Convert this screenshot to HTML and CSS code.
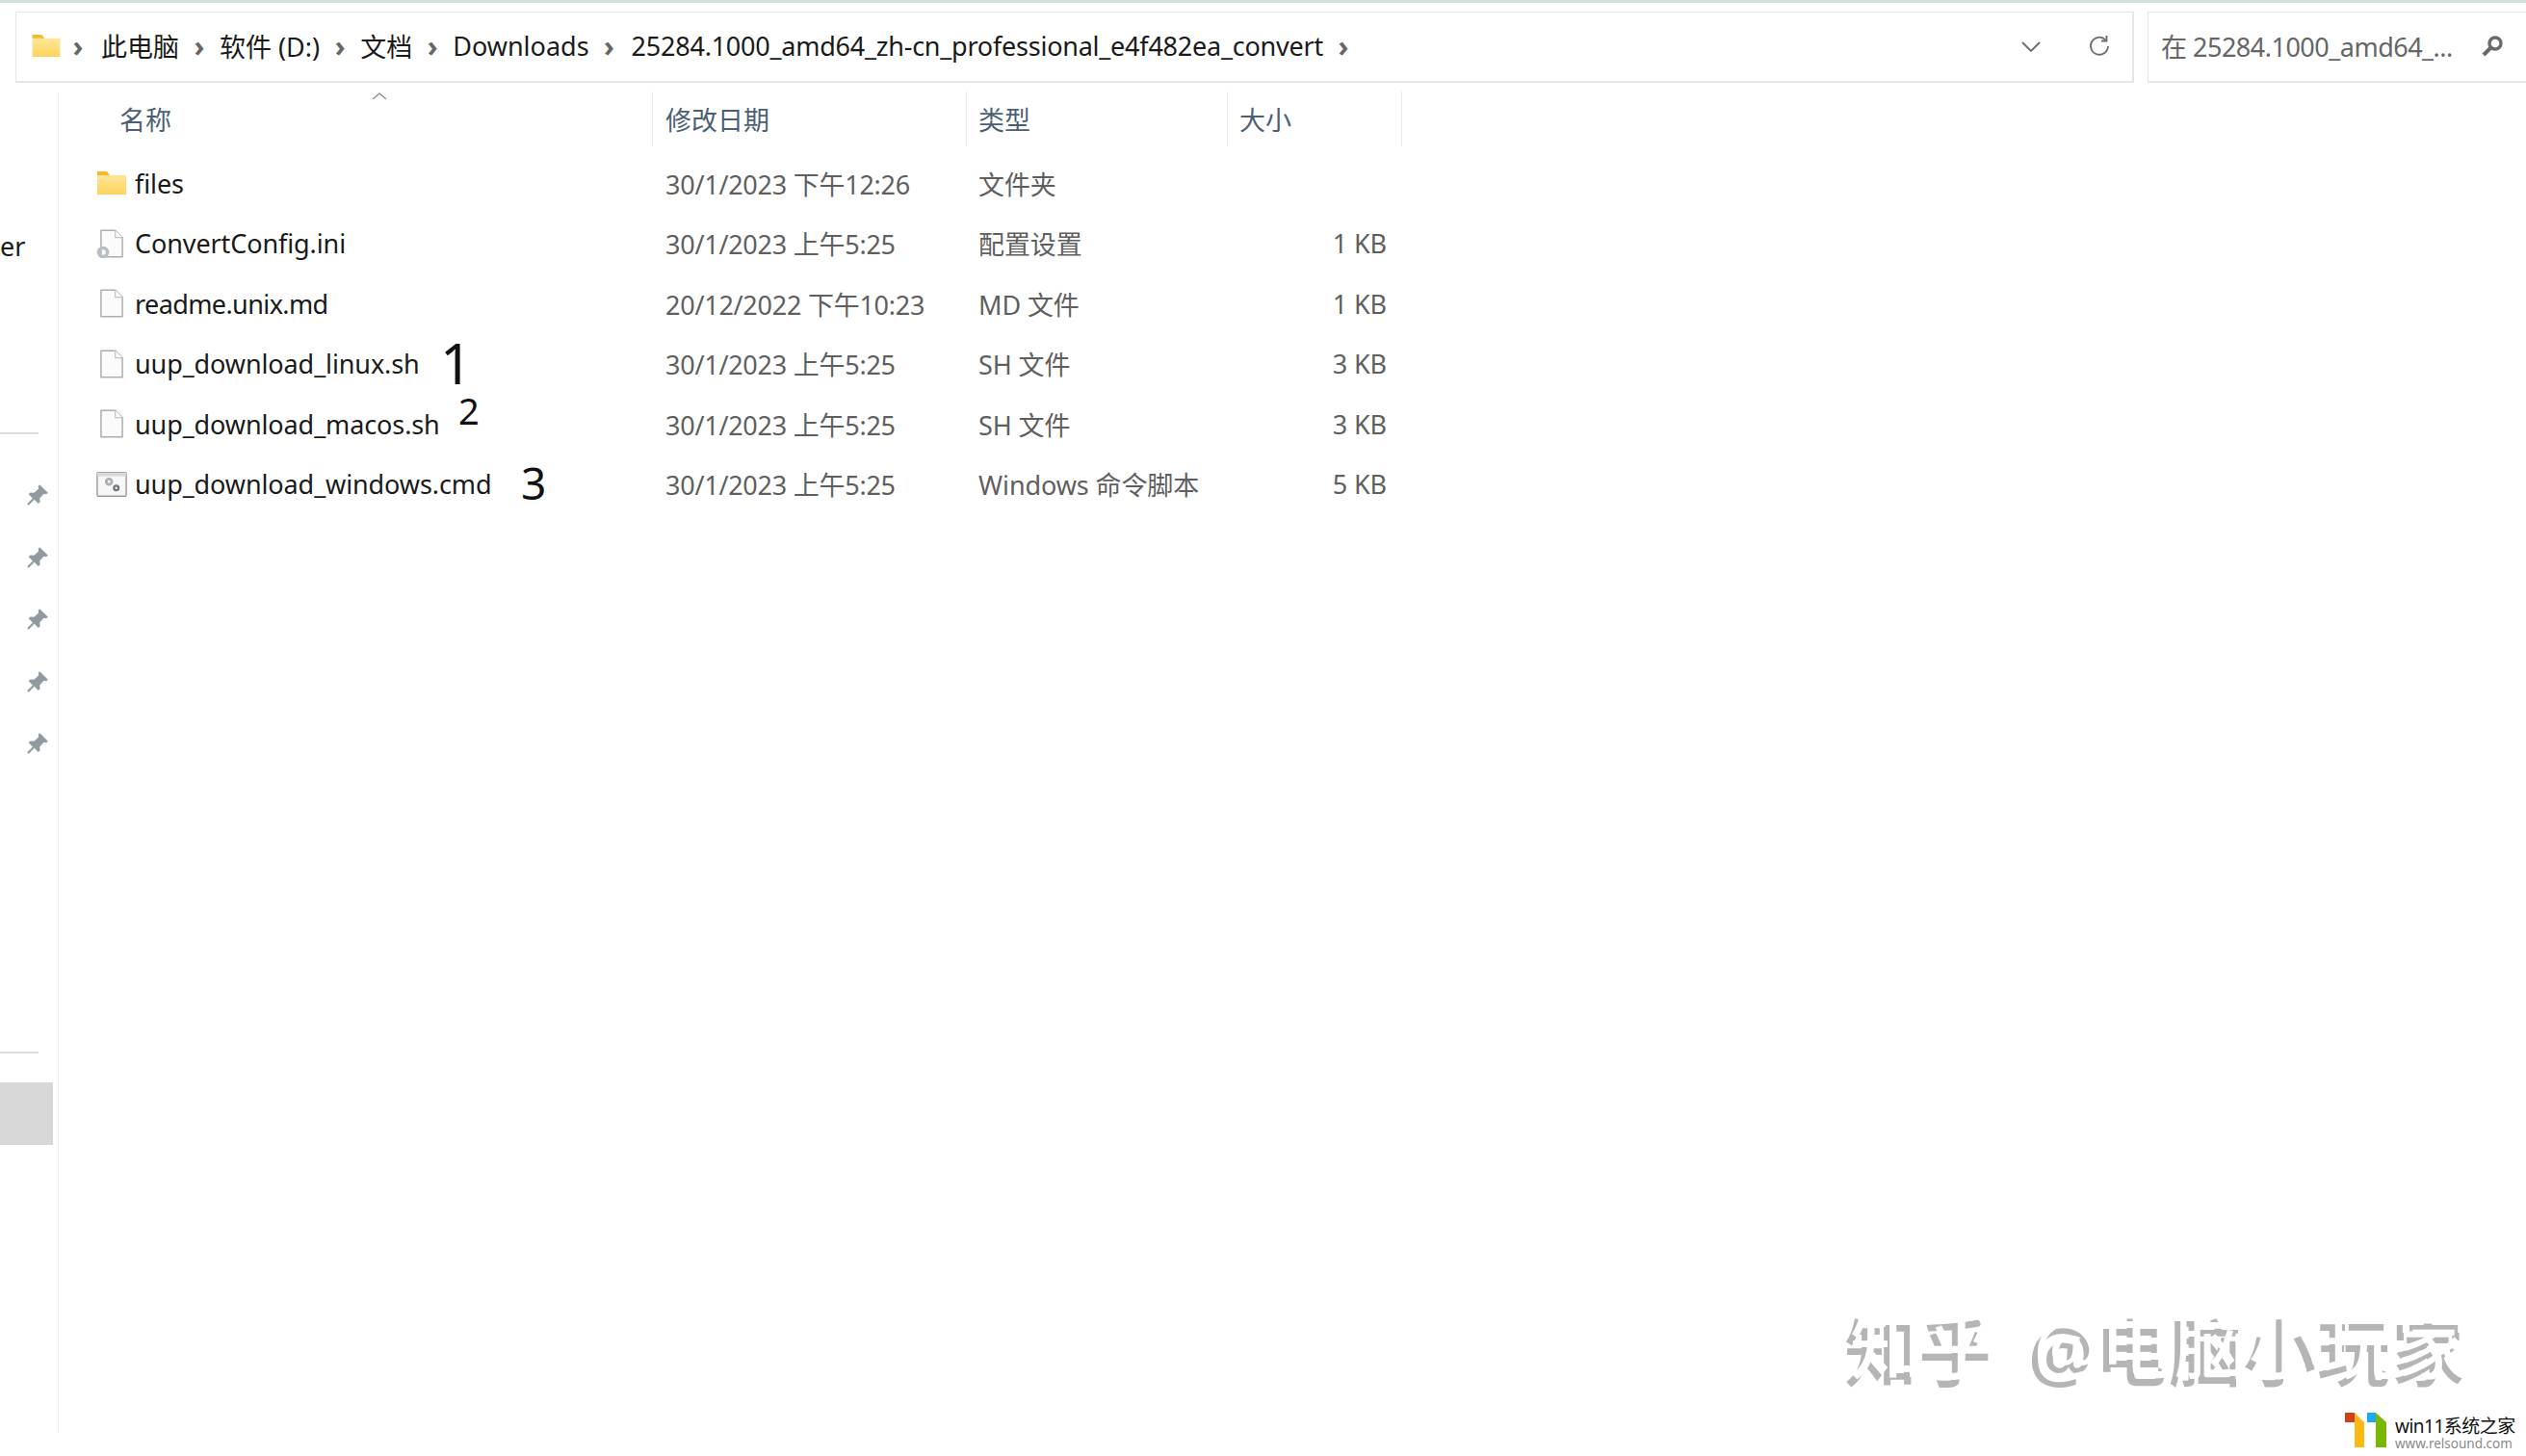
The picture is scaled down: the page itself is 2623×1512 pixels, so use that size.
FILE: index.html
```html
<!DOCTYPE html>
<html lang="zh-CN">
<head>
  <meta charset="UTF-8" />
  <title>Downloads</title>
  <link rel="stylesheet" href="styles.css">
</head>
<body>
  <svg class="defs" width="0" height="0">
    <symbol id="folder" viewBox="0 0 30 24">
      <defs>
        <linearGradient id="folderFill" x1="0" y1="0" x2="0" y2="1">
          <stop offset="0" stop-color="#ffe9a0" />
          <stop offset="1" stop-color="#fdd35c" />
        </linearGradient>
      </defs>
      <path d="M0 1h10l3 3h17v20H0z" fill="url(#folderFill)" />
      <path d="M0 0h10l3 4H0z" fill="#f5b82e" />
    </symbol>
    <symbol id="page" viewBox="0 0 26 32">
      <path d="M1 1h16l8 8v22H1z" fill="#fbfbfb" stroke="#adadad" stroke-width="1.6" />
      <path d="M17 1v8h8" fill="#fff" stroke="#c4c4c4" stroke-width="1.4" />
    </symbol>
    <symbol id="pin" viewBox="0 0 24 24">
      <path d="M14 2l8 8-1.600 1.200-2.400-.4-4 4.400.4 3.600-1.600 1.600-4-4L3.500 22 2 20.500l5.400-5.300-4-4L5 9.600l3.600.4L13 6l-.4-2.400z" fill="#8f9aa1" />
    </symbol>
  </svg>

  <div class="topline"></div>

  <header class="toolbar">
    <div class="address">
      <svg class="addr-folder"><use href="#folder" /></svg>
      <span class="sep">›</span>
      <span class="crumb crumb-first">此电脑</span>
      <span class="sep">›</span>
      <span class="crumb">软件 (D:)</span>
      <span class="sep">›</span>
      <span class="crumb">文档</span>
      <span class="sep">›</span>
      <span class="crumb">Downloads</span>
      <span class="sep">›</span>
      <span class="crumb crumb-long">25284.1000_amd64_zh-cn_professional_e4f482ea_convert</span>
      <span class="sep">›</span>
      <div class="addr-tools">
        <svg class="tool" viewBox="0 0 24 24"><path d="M3 8l9 9 9-9" fill="none" stroke="#6b6b6b" stroke-width="1.800" /></svg>
        <svg class="tool" viewBox="0 0 24 24"><path d="M18.500 5.500A9 9 0 1 0 21 12" fill="none" stroke="#6b6b6b" stroke-width="1.800" /><path d="M14 6.500h5.500V1" fill="none" stroke="#6b6b6b" stroke-width="1.800" /></svg>
      </div>
    </div>
    <div class="search">
      <span class="search-text">在 25284.1000_amd64_...</span>
      <svg class="search-icon" viewBox="0 0 24 24"><circle cx="15" cy="9" r="6" fill="none" stroke="#6a6a6a" stroke-width="3.400" /><path d="M10.500 13.500L3 21" stroke="#6a6a6a" stroke-width="4" /></svg>
    </div>
  </header>

  <div class="main">
    <aside class="nav">
      <div class="nav-label">er</div>
      <hr class="nav-line first">
      <ul class="pins">
        <li><svg class="pin"><use href="#pin" /></svg></li>
        <li><svg class="pin"><use href="#pin" /></svg></li>
        <li><svg class="pin"><use href="#pin" /></svg></li>
        <li><svg class="pin"><use href="#pin" /></svg></li>
        <li><svg class="pin"><use href="#pin" /></svg></li>
      </ul>
      <hr class="nav-line second">
      <div class="nav-selected"></div>
    </aside>

    <section class="files">
      <div class="row head">
        <div class="col name">名称<svg class="sort" viewBox="0 0 16 8"><path d="M1 7l7-6 7 6" fill="none" stroke="#8a8a8a" stroke-width="1.300" /></svg></div>
        <div class="col date">修改日期</div>
        <div class="col type">类型</div>
        <div class="col size">大小</div>
      </div>

      <div class="row item">
        <div class="col name"><svg class="icon folder-icon"><use href="#folder" /></svg>files</div>
        <div class="col date">30/1/2023 下午12:26</div>
        <div class="col type">文件夹</div>
        <div class="col size"></div>
      </div>
      <div class="row item">
        <div class="col name">
          <svg class="icon" viewBox="0 0 32 32">
            <use href="#page" x="4" width="24" height="32" />
            <circle cx="7" cy="25" r="4.500" fill="none" stroke="#b7bec4" stroke-width="3.500" />
          </svg>ConvertConfig.ini
        </div>
        <div class="col date">30/1/2023 上午5:25</div>
        <div class="col type">配置设置</div>
        <div class="col size">1 KB</div>
      </div>
      <div class="row item">
        <div class="col name name-tight"><svg class="icon"><use href="#page" x="4" width="24" height="32" /></svg>readme.unix.md</div>
        <div class="col date">20/12/2022 下午10:23</div>
        <div class="col type">MD 文件</div>
        <div class="col size">1 KB</div>
      </div>
      <div class="row item">
        <div class="col name"><svg class="icon"><use href="#page" x="4" width="24" height="32" /></svg>uup_download_linux.sh<span class="mark mark-1">1</span></div>
        <div class="col date">30/1/2023 上午5:25</div>
        <div class="col type">SH 文件</div>
        <div class="col size">3 KB</div>
      </div>
      <div class="row item">
        <div class="col name"><svg class="icon"><use href="#page" x="4" width="24" height="32" /></svg>uup_download_macos.sh<span class="mark mark-2">2</span></div>
        <div class="col date">30/1/2023 上午5:25</div>
        <div class="col type">SH 文件</div>
        <div class="col size">3 KB</div>
      </div>
      <div class="row item">
        <div class="col name">
          <svg class="icon" viewBox="0 0 34 28">
            <rect x="1" y="1" width="32" height="26" rx="1" fill="#f7f7f7" stroke="#9a9a9a" stroke-width="1.500" />
            <rect x="1" y="1" width="32" height="4" fill="#d9d9d9" />
            <circle cx="14" cy="11" r="3" fill="none" stroke="#a9b0b6" stroke-width="3" />
            <circle cx="22" cy="18" r="2.500" fill="none" stroke="#6f767c" stroke-width="2.500" />
          </svg>uup_download_windows.cmd<span class="mark mark-3">3</span>
        </div>
        <div class="col date">30/1/2023 上午5:25</div>
        <div class="col type">Windows 命令脚本</div>
        <div class="col size">5 KB</div>
      </div>
    </section>
  </div>

  <div class="watermark">知乎 @电脑小玩家</div>

  <div class="site-logo">
    <svg class="logo-mark" viewBox="0 0 43 36">
      <rect x="0" y="0" width="10" height="10" fill="#d2401e" />
      <path d="M10 0l10 10v26H10z" fill="#fdb913" />
      <rect x="23" y="0" width="9" height="10" fill="#1ea7f2" />
      <path d="M32 0l11 10v26H32z" fill="#7ab800" />
    </svg>
    <div class="logo-text">
      <div class="logo-title">win11系统之家</div>
      <div class="logo-url">www.relsound.com</div>
    </div>
  </div>
</body>
</html>
```

FILE: styles.css
```css
* {
  box-sizing: border-box;
}

html, body {
  margin: 0;
  height: 100%;
}

body {
  position: relative;
  overflow: hidden;
  background: #fff;
  color: #1a1a1a;
  font-family: "Noto Sans", "Noto Sans CJK SC", sans-serif;
  font-size: 27px;
}

.defs {
  position: absolute;
}

.topline {
  height: 3px;
  background: #cfdedf;
}

.toolbar {
  display: flex;
  height: 74px;
  margin-top: 9px;
  padding-left: 16px;
  gap: 14px;
}

.address {
  flex: 0 0 2200px;
  display: flex;
  align-items: center;
  padding-left: 16px;
  padding-bottom: 2px;
  border: 2px solid #e6e6e6;
  border-left-width: 1px;
  border-top-width: 1px;
}

.addr-folder {
  width: 30px;
  height: 23px;
  margin-right: 6px;
}

.sep {
  width: 16px;
  margin: 0 4px;
  color: #666;
  font-size: 30px;
  font-weight: 700;
  line-height: 1;
  text-align: center;
}

.crumb {
  margin: 0 9px;
  white-space: nowrap;
}

.crumb-first {
  margin-left: 12px;
}

.crumb-long {
  margin-left: 11px;
  letter-spacing: -0.230px;
}

.addr-tools {
  display: flex;
  gap: 47px;
  margin-left: auto;
  margin-right: 22px;
}

.tool {
  width: 24px;
  height: 24px;
}

.search {
  flex: 1;
  display: flex;
  align-items: center;
  padding-left: 13px;
  padding-bottom: 2px;
  border: 2px solid #e6e6e6;
  border-right: none;
  border-top-width: 1px;
  border-left-width: 1px;
  color: #666;
}

.search-text {
  letter-spacing: -0.500px;
  white-space: nowrap;
}

.search-icon {
  width: 24px;
  height: 24px;
  margin-left: 29px;
}

.main {
  display: flex;
  height: 1394px;
  margin-top: 9px;
}

.nav {
  flex: 0 0 61px;
  border-right: 1px solid #f1f1f1;
  color: #1a1a1a;
}

.nav-label {
  margin-top: 141px;
  line-height: 40px;
}

.nav-line {
  width: 40px;
  height: 2px;
  margin: 0;
  border: none;
  background: #dcdcdc;
}

.nav-line.first {
  margin-top: 173px;
}

.nav-line.second {
  margin-top: 268px;
}

.pins {
  margin: 50px 0 0;
  padding: 0;
  list-style: none;
}

.pins li {
  display: flex;
  justify-content: flex-end;
  height: 64.500px;
  padding-right: 8px;
}

.pin {
  width: 26px;
  height: 26px;
}

.nav-selected {
  width: 55px;
  height: 65px;
  margin-top: 30px;
  background: #d8d8d8;
}

.files {
  flex: 1;
}

.row {
  display: flex;
  align-items: center;
}

.head {
  height: 57px;
  color: #4c5f76;
  font-size: 27px;
  margin-bottom: 7px;
}

.head .col {
  height: 100%;
  display: flex;
  align-items: center;
  border-right: 1px solid #e9e9e9;
}

.item {
  height: 62.500px;
  color: #5f5f5f;
  letter-spacing: -0.100px;
}

.col {
  flex: none;
  white-space: nowrap;
}

.name {
  position: relative;
  display: flex;
  align-items: center;
  width: 617px;
  padding-left: 63px;
}

.item .name {
  padding-left: 39px;
  color: #1a1a1a;
}

.item .name-tight {
  letter-spacing: -0.600px;
}

.date {
  width: 326px;
  padding-left: 13px;
}

.item .date {
  letter-spacing: -0.250px;
}

.type {
  width: 271px;
  padding-left: 12px;
}

.size {
  width: 181px;
  padding-left: 12px;
}

.item .size {
  padding-right: 16px;
  text-align: right;
}

.sort {
  position: absolute;
  left: 325px;
  top: 1px;
  width: 16px;
  height: 8px;
}

.icon {
  flex: none;
  width: 32px;
  height: 32px;
  margin-right: 8px;
}

.folder-icon {
  height: 24px;
}

.mark {
  position: absolute;
  color: #111;
  line-height: 1;
  letter-spacing: 0;
}

.mark-1 {
  left: 396px;
  top: -11px;
  font-size: 58px;
}

.mark-2 {
  left: 415px;
  top: -15px;
  font-size: 38px;
}

.mark-3 {
  left: 480px;
  top: -6px;
  font-size: 46px;
}

.watermark {
  position: absolute;
  left: 1921px;
  top: 1347px;
  font-size: 76px;
  font-weight: 500;
  line-height: 100px;
  color: #fff;
  text-shadow: -6px 8px 0 #b5b5b5;
  letter-spacing: 1px;
  word-spacing: 16px;
  white-space: nowrap;
}

.site-logo {
  position: absolute;
  left: 2435px;
  top: 1467px;
  display: flex;
  gap: 9px;
}

.logo-mark {
  width: 43px;
  height: 36px;
}

.logo-text {
  padding-top: 3px;
}

.logo-title {
  color: #111;
  font-size: 19px;
  line-height: 22px;
  letter-spacing: -0.500px;
  white-space: nowrap;
}

.logo-url {
  color: #8a8a8a;
  font-size: 13.500px;
  line-height: 15px;
  white-space: nowrap;
}
```
